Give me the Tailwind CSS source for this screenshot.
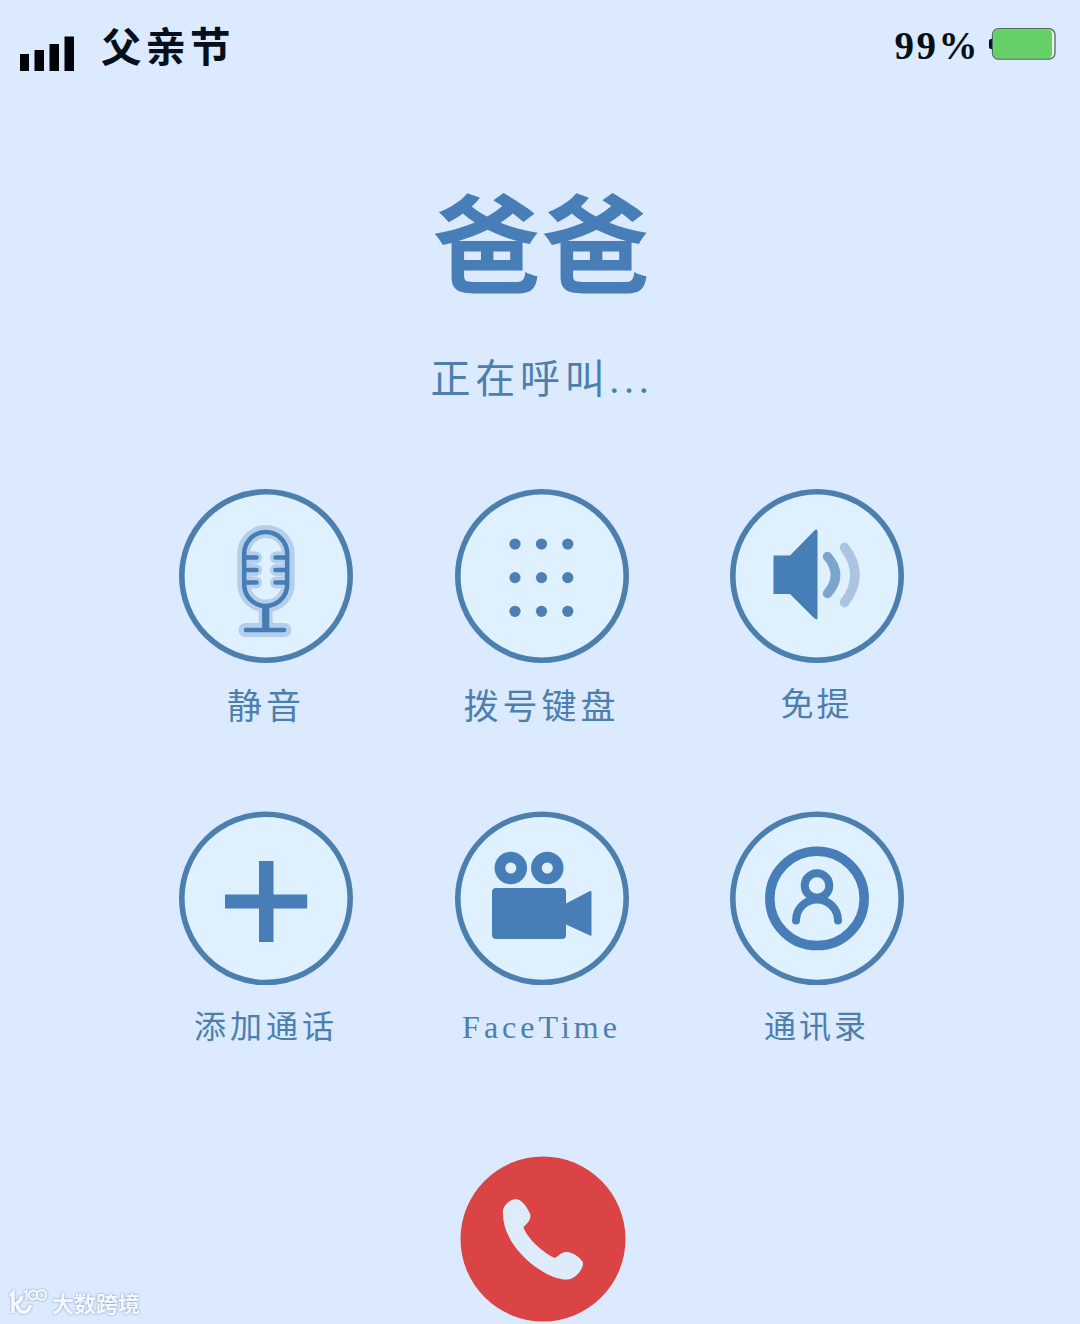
<!DOCTYPE html>
<html lang="zh-CN">
<head>
<meta charset="utf-8">
<meta name="viewport" content="width=device-width, initial-scale=1">
<title>父亲节</title>
<script src="https://cdn.jsdelivr.net/npm/@tailwindcss/browser@4"></script>
</head>
<body class="bg-[#dbeafe] font-['Liberation_Serif','Noto_Sans_CJK_SC',sans-serif] text-[#4c7fae]">
<div class="relative flex h-[1324px] w-[1080px] flex-col items-center overflow-hidden">
  <header class="flex h-[94px] w-full items-center justify-between pl-[19px] pr-6 text-[#06101c]">
    <div class="flex items-center gap-[26px]">
      <svg class="mt-3.5 h-9 w-[56px]" viewBox="0 0 56 36" fill="#000308"><path d="M1 18h9v17H1zM15.500 14h9.500v21h-9.500zM30.500 8H40v27h-9.500zM45.500 0.500H55V35h-9.500z"/></svg>
      <span class="-mt-1 font-['Noto_Sans_CJK_SC',sans-serif] text-[40.500px] font-bold leading-[60px] tracking-[4px]">父亲节</span>
    </div>
    <div class="flex items-center gap-[8px]">
      <span class="-mt-0.5 text-[39px] font-bold leading-[60px] tracking-[2.500px]">99%</span>
      <svg class="-mt-1.5 h-8 w-[68px]" viewBox="0 0 68 32"><rect x="1" y="11" width="6" height="10" rx="2" fill="#06101c"/><rect x="4.500" y=".7" width="62.500" height="30.300" rx="6" fill="#e8f8ed" stroke="#4c6b5e" stroke-width="1.300"/><path d="M10.500 1.300H61Q64 2 64 6V26Q64 29.500 61 30.400H10.500a5.400 5.400 0 0 1-5.400-5.400V6.700a5.400 5.400 0 0 1 5.400-5.400z" fill="#65d067"/></svg>
    </div>
  </header>

  <h1 class="mt-[90px] pl-[4px] text-[108px] font-bold leading-[130px] tracking-[1px] text-[#477eb8]">爸爸</h1>
  <p class="mt-[36px] pl-[4px] text-[40px] leading-[60px] tracking-[4.700px]">正在呼叫...</p>

  <main class="mt-[79px] grid w-[828px] grid-cols-[276px_275px_275px] pl-[2px]">
    <div class="flex h-[322px] flex-col items-center">
      <svg class="size-[174px]" viewBox="0 0 174 174" fill="none">
        <circle cx="87" cy="87" r="84.200" fill="#dff0ff" stroke="#4c7fae" stroke-width="5.600"/>
        <g stroke="#b4cfec" stroke-width="13" stroke-linecap="round">
          <rect x="64.700" y="42.500" width="44.500" height="74.500" rx="22.200"/>
          <path d="M86.700 119V139M66.500 141H105.500" stroke-width="14"/>
          <path d="M66 68.500H77M66 81H77M66 93.500H77M108 68.500H97M108 81H97M108 93.500H97" stroke-width="12"/>
        </g>
        <g stroke="#477cb5" stroke-width="4.500" stroke-linecap="round">
          <rect x="65.200" y="43" width="43" height="74" rx="21.500"/>
          <path d="M66 68.500H77.500M66 81H77.500M66 93.500H77.500M108 68.500H96.500M108 81H96.500M108 93.500H96.500M67 141H105"/>
          <path d="M86.700 117V140" stroke-width="7.200" stroke-linecap="butt"/>
        </g>
      </svg>
      <span class="mt-[20px] text-[35px] leading-[50px] tracking-[4px]">静音</span>
    </div>
    <div class="flex h-[322px] flex-col items-center">
      <svg class="size-[174px]" viewBox="0 0 174 174">
        <circle cx="87" cy="87" r="84.200" fill="#dff0ff" stroke="#4c7fae" stroke-width="5.600"/>
        <g fill="#4c7fb2"><circle cx="60" cy="55" r="5.600"/><circle cx="86.500" cy="55" r="5.600"/><circle cx="112.800" cy="55" r="5.600"/><circle cx="60" cy="88.600" r="5.600"/><circle cx="86.500" cy="88.600" r="5.600"/><circle cx="112.800" cy="88.600" r="5.600"/><circle cx="60" cy="122.300" r="5.600"/><circle cx="86.500" cy="122.300" r="5.600"/><circle cx="112.800" cy="122.300" r="5.600"/></g>
      </svg>
      <span class="mt-[20px] text-[35px] leading-[50px] tracking-[4px]">拨号键盘</span>
    </div>
    <div class="flex h-[322px] flex-col items-center">
      <svg class="size-[174px]" viewBox="0 0 174 174" fill="none">
        <circle cx="87" cy="87" r="84.200" fill="#dff0ff" stroke="#4c7fae" stroke-width="5.600"/>
        <path d="M43.500 66.500H60L84 42Q87.500 39 87.500 42.500V128.500Q87.500 132 84 129L60 105H43.500z" fill="#467eb8"/>
        <path d="M97.500 67.500Q113.500 86 97.500 104.500" stroke="#7ba5cf" stroke-width="9.500" stroke-linecap="round"/>
        <path d="M114.500 58.500Q135.500 86 114.500 113.500" stroke="#abc4df" stroke-width="9.500" stroke-linecap="round"/>
      </svg>
      <span class="mt-[17px] text-[33px] leading-[50px] tracking-[3px]">免提</span>
    </div>
    <div class="flex flex-col items-center">
      <svg class="size-[174px]" viewBox="0 0 174 174">
        <circle cx="87" cy="87.400" r="84.200" fill="#dff0ff" stroke="#4c7fae" stroke-width="5.600"/>
        <path d="M80 50H94.500V83.500H128.200V97.500H94.500V131H80V97.500H46V83.500H80z" fill="#477eb8"/>
      </svg>
      <span class="mt-[17px] text-[32px] leading-[50px] tracking-[4px]">添加通话</span>
    </div>
    <div class="flex flex-col items-center">
      <svg class="size-[174px]" viewBox="0 0 174 174">
        <circle cx="87" cy="87.400" r="84.200" fill="#dff0ff" stroke="#4c7fae" stroke-width="5.600"/>
        <g fill="none" stroke="#477eb8" stroke-width="10.700"><circle cx="55.800" cy="57" r="10.900"/><circle cx="92.300" cy="57" r="10.900"/></g>
        <path d="M41 77H107Q111 77 111 81V92.500L135 80Q136.500 79.500 136.500 81V124Q136.500 125.500 135 124.500L111 113.500V124Q111 128 107 128H41Q37 128 37 124V81Q37 77 41 77z" fill="#477eb8"/>
      </svg>
      <span class="mt-[17px] text-[32px] leading-[50px] tracking-[4px]">FaceTime</span>
    </div>
    <div class="flex flex-col items-center">
      <svg class="size-[174px]" viewBox="0 0 174 174" fill="none">
        <circle cx="87" cy="87.400" r="84.200" fill="#dff0ff" stroke="#4c7fae" stroke-width="5.600"/>
        <circle cx="87" cy="87.400" r="47.200" stroke="#477eb8" stroke-width="9.500"/>
        <circle cx="87" cy="74.500" r="12.300" stroke="#477eb8" stroke-width="8"/>
        <path d="M66 109.500A21 21 0 0 1 108 109.500" stroke="#477eb8" stroke-width="8" stroke-linecap="round"/>
      </svg>
      <span class="mt-[17px] text-[32px] leading-[50px] tracking-[3px]">通讯录</span>
    </div>
  </main>

  <button class="ml-[5px] mt-[104px] size-[166px] shrink-0">
    <svg class="size-[166px]" viewBox="0 0 166 166">
      <circle cx="83" cy="83" r="82.500" fill="#da4445"/>
      <path d="M43 54C44 49 50 43.500 55 43.200C61 42.500 66 49 70 57.500C72 63 67 68 63.500 71C66 81 83 97 95 102C98 100.500 100 97 105 96C112 95 120 101 123 106.500C124 113 115 123 108 123.500C94 124.500 74 112 62 99C49 85 42 70 43 54z" fill="#deebfb"/>
    </svg>
  </button>

  <div class="absolute bottom-[3px] left-2 flex h-[38px] items-center gap-1 text-[#f4f9ff] drop-shadow-[0_0_1px_#8095b5]">
    <svg class="h-[30px] w-10" viewBox="0 0 40 30" fill="none" stroke="currentColor"><path d="M2 9L5 6V26M14 9Q12 16 6 17M9 18Q11 26 17 25Q21 24 22.500 18" stroke-width="3.600"/><path d="M16 5L18.500 4V13" stroke-width="2.200"/><circle cx="25" cy="8" r="4.300" stroke-width="2.200"/><circle cx="33.500" cy="8" r="4.800" stroke-width="2.200"/></svg>
    <span class="font-['Noto_Sans_CJK_SC',sans-serif] text-[22px] font-bold leading-[38px]">大数跨境</span>
  </div>
</div>
</body>
</html>
